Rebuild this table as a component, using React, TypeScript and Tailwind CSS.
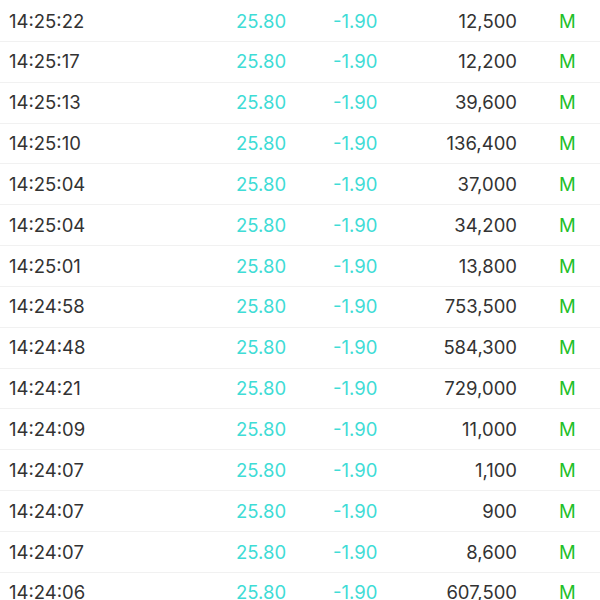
const trades = [
  ['14:25:22', '12,500'],
  ['14:25:17', '12,200'],
  ['14:25:13', '39,600'],
  ['14:25:10', '136,400'],
  ['14:25:04', '37,000'],
  ['14:25:04', '34,200'],
  ['14:25:01', '13,800'],
  ['14:24:58', '753,500'],
  ['14:24:48', '584,300'],
  ['14:24:21', '729,000'],
  ['14:24:09', '11,000'],
  ['14:24:07', '1,100'],
  ['14:24:07', '900'],
  ['14:24:07', '8,600'],
  ['14:24:06', '607,500'],
]

export default function App() {
  return (
    <div className="w-[600px] h-[600px] overflow-hidden bg-white pt-[1px] font-['Inter',sans-serif] text-[18.5px]">
      {trades.map(([time, vol], i) => (
        <div
          key={i}
          className="flex items-center h-[40.85px] pt-[1px] border-b border-[#f1f1f1]"
        >
          <span className="w-[200px] pl-[9px] text-[#333333]">{time}</span>
          <span className="w-[120px] pl-[36px] text-[#3fdcd6]">25.80</span>
          <span className="w-[90px] pl-[13px] text-[#3fdcd6]">-1.90</span>
          <span className="w-[107px] text-right text-[#333333]">{vol}</span>
          <span className="flex-1 pl-[42px] text-[#1fbf2b]">M</span>
        </div>
      ))}
    </div>
  )
}
